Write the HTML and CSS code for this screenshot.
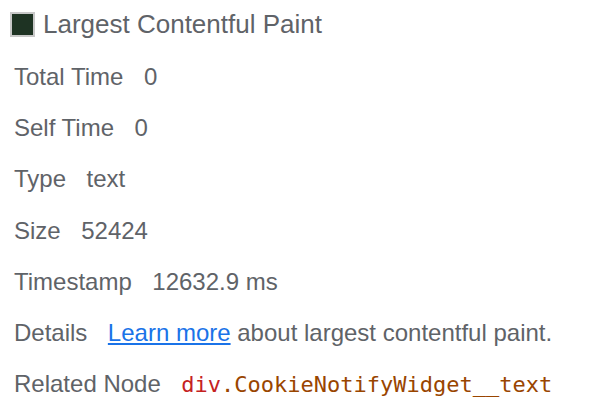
FILE: index.html
```html
<!DOCTYPE html>
<html>
<head>
<meta charset="utf-8">
<link rel="stylesheet" href="styles.css">
</head>
<body>
<div class="summary">
  <div class="title"><span class="swatch"></span><span>Largest Contentful Paint</span></div>
  <div class="rows">
    <div class="row"><span class="label">Total Time</span><span class="value">0</span></div>
    <div class="row"><span class="label">Self Time</span><span class="value">0</span></div>
    <div class="row"><span class="label">Type</span><span class="value">text</span></div>
    <div class="row"><span class="label">Size</span><span class="value">52424</span></div>
    <div class="row"><span class="label">Timestamp</span><span class="value">12632.9 ms</span></div>
    <div class="row"><span class="label">Details</span><span class="value"><a class="link" href="#">Learn more</a> about largest contentful paint.</span></div>
    <div class="row"><span class="label">Related Node</span><span class="value node"><span class="tag">div</span><span class="cls">.CookieNotifyWidget__text</span></span></div>
  </div>
</div>
</body>
</html>
```

FILE: styles.css
```css
html, body {
  margin: 0;
  padding: 0;
  background: #ffffff;
}
body {
  font-family: "Liberation Sans", Arial, sans-serif;
  color: #5f6368;
}
.summary {
  padding: 10px 14px;
}
.title {
  display: flex;
  align-items: center;
  gap: 8px;
  font-size: 26px;
  height: 28px;
  margin-left: -4px;
}
.swatch {
  width: 21px;
  height: 21px;
  background: #1e3323;
  border: 2px solid #c8c8c8;
  flex: none;
}
.rows {
  display: flex;
  flex-direction: column;
  margin-top: 13px;
}
.row {
  display: flex;
  align-items: baseline;
  height: 51.2px;
  line-height: 51.2px;
  font-size: 24px;
  white-space: nowrap;
}
.label {
  margin-right: 20.5px;
}
.link {
  color: #1a73e8;
  text-decoration: underline;
}
.node {
  font-family: "DejaVu Sans Mono", monospace;
  font-size: 22px;
}
.tag {
  color: #c5221f;
}
.cls {
  color: #994500;
}
```
